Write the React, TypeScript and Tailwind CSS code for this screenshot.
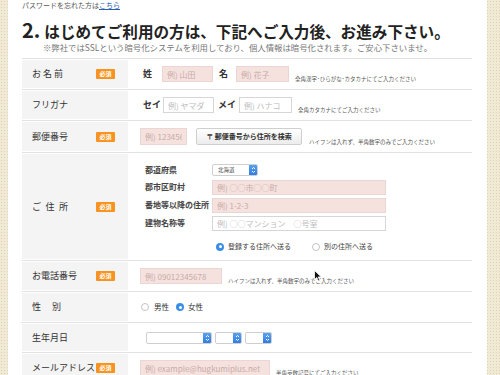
import React from 'react';

const font = { fontFamily: '"Noto Sans CJK JP", "Noto Sans", sans-serif' };

function Badge() {
  return (
    <span className="inline-flex h-[10px] w-[19px] items-center justify-center rounded-[1px] bg-[#f7931e] text-[6px] font-bold leading-none text-white">
      必須
    </span>
  );
}

function Field({ w, ph, pink = true, h = 'h-[16px]' }: { w: string; ph: string; pink?: boolean; h?: string }) {
  return (
    <input
      readOnly
      placeholder={ph}
      className={`${w} ${h} px-[4px] text-[8px] outline-none ${
        pink
          ? 'border border-[#ecd6d3] bg-[#f5e2df] placeholder:text-[#c9aaa7]'
          : 'border border-[#d6d6d6] bg-white placeholder:text-[#bdbdbd]'
      }`}
    />
  );
}

function Select({ w, text = '' }: { w: string; text?: string }) {
  return (
    <div className={`${w} flex h-[12px] items-stretch overflow-hidden rounded-[2px] border border-[#cfcfcf] bg-white`}>
      <span className="flex-1 pl-[5px] text-[5.5px] leading-[11px] text-[#444]">{text}</span>
      <span className="flex w-[8px] items-center justify-center bg-gradient-to-b from-[#5aa2f0] to-[#2f7de0]">
        <svg width="5" height="8" viewBox="0 0 5 8" fill="none" stroke="white" strokeWidth="1">
          <path d="M1 3 L2.5 1.5 L4 3" />
          <path d="M1 5 L2.5 6.5 L4 5" />
        </svg>
      </span>
    </div>
  );
}

function Radio({ on }: { on?: boolean }) {
  return on ? (
    <span className="inline-flex h-[8px] w-[8px] shrink-0 items-center justify-center rounded-full bg-[#3b8ee8]">
      <span className="h-[3px] w-[3px] rounded-full bg-white" />
    </span>
  ) : (
    <span className="inline-block h-[8px] w-[8px] shrink-0 rounded-full border border-[#c4c4c4] bg-white" />
  );
}

function Note({ children }: { children: React.ReactNode }) {
  return <span className="whitespace-nowrap text-[5.5px] text-[#555]">{children}</span>;
}

function Row({ label, req, h, children }: { label: string; req?: boolean; h: string; children: React.ReactNode }) {
  return (
    <div className={`flex ${h} border-b border-[#e2e2e2]`}>
      <div className="my-[1px] flex w-[106px] items-center justify-between bg-[#f4f4f4] pl-[10px] pr-[13px]">
        <span className="whitespace-pre text-[9px] text-[#333]">{label}</span>
        {req && <Badge />}
      </div>
      <div className="flex flex-1 items-center">{children}</div>
    </div>
  );
}

export default function App() {
  return (
    <div
      style={font}
      className="relative h-[375px] w-[500px] overflow-hidden bg-[#f0ead5] bg-[radial-gradient(#ddd3b4_0.8px,transparent_0.9px)] bg-[length:3px_3px]"
    >
      <div className="ml-[8px] h-full w-[479px] bg-white pl-[14px] pr-[15px]">
        <p className="pt-[1px] text-[7px] leading-[9px] text-[#555]">
          パスワードを忘れた方は<span className="text-[#2a5db0] underline">こちら</span>
        </p>
        <h1 className="mt-[10px] whitespace-nowrap text-[15.6px] font-bold leading-[20px] text-[#222]">
          <span className="mr-[4px] text-[20px]">2.</span>はじめてご利用の方は、下記へご入力後、お進み下さい。
        </h1>
        <p className="mt-[1px] whitespace-nowrap pl-[21px] text-[8.4px] leading-[10px] text-[#777]">
          ※弊社ではSSLという暗号化システムを利用しており、個人情報は暗号化されます。ご安心下さいませ。
        </p>

        <div className="mt-[6px] border-t border-[#e2e2e2]">
          <Row label="お 名 前" req h="h-[31px]">
            <span className="ml-[15px] text-[9px] font-bold text-[#333]">姓</span>
            <span className="ml-[10px] flex"><Field w="w-[51px]" ph="例) 山田" /></span>
            <span className="ml-[6px] text-[9px] font-bold text-[#333]">名</span>
            <span className="ml-[8px] flex"><Field w="w-[53px]" ph="例) 花子" /></span>
            <span className="ml-[6px]"><Note>全角漢字･ひらがな･カタカナにてご入力ください</Note></span>
          </Row>
          <Row label="フリガナ" h="h-[31px]">
            <span className="ml-[15px] text-[9px] font-bold text-[#333]">セイ</span>
            <span className="ml-[2px] flex"><Field w="w-[51px]" ph="例) ヤマダ" pink={false} /></span>
            <span className="ml-[4px] text-[9px] font-bold text-[#333]">メイ</span>
            <span className="ml-[3px] flex"><Field w="w-[53px]" ph="例) ハナコ" pink={false} /></span>
            <span className="ml-[6px]"><Note>全角カタカナにてご入力ください</Note></span>
          </Row>
          <Row label="郵便番号" req h="h-[32px]">
            <span className="ml-[12px] flex"><Field w="w-[47px]" ph="例) 1234567" h="h-[17px]" /></span>
            <button className="ml-[9px] flex h-[17px] w-[106px] items-center justify-center rounded-[2px] border border-[#cfcfcf] bg-gradient-to-b from-white to-[#ececec] text-[7px] font-bold text-[#333]">
              〒 郵便番号から住所を検索
            </button>
            <span className="ml-[7px]"><Note>ハイフンは入れず、半角数字のみでご入力ください</Note></span>
          </Row>
          <Row label={'ご\u2002住\u2002所'} req h="h-[108px]">
            <div className="ml-[17px] flex flex-col">
              <div className="flex h-[17px] items-center">
                <span className="w-[67px] text-[8px] font-bold text-[#444]">都道府県</span>
                <Select w="w-[46px]" text="北海道" />
              </div>
              <div className="flex h-[18px] items-center">
                <span className="w-[67px] text-[8px] font-bold text-[#444]">郡市区町村</span>
                <Field w="w-[174px]" ph="例) ○○市○○町" h="h-[15px]" />
              </div>
              <div className="flex h-[18px] items-center">
                <span className="w-[67px] whitespace-nowrap text-[8px] font-bold text-[#444]">番地等以降の住所</span>
                <Field w="w-[174px]" ph="例) 1-2-3" h="h-[15px]" />
              </div>
              <div className="flex h-[18px] items-center">
                <span className="w-[67px] text-[8px] font-bold text-[#444]">建物名称等</span>
                <Field w="w-[174px]" ph="例) ○○マンション　○号室" pink={false} h="h-[15px]" />
              </div>
              <div className="mt-[9px] flex items-center pl-[71px] text-[7px] text-[#444]">
                <Radio on />
                <span className="ml-[4px]">登録する住所へ送る</span>
                <span className="ml-[21px] flex"><Radio /></span>
                <span className="ml-[4px]">別の住所へ送る</span>
              </div>
            </div>
          </Row>
          <Row label="お電話番号" req h="h-[31px]">
            <span className="ml-[12px] flex"><Field w="w-[82px]" ph="例) 09012345678" /></span>
            <span className="ml-[6px]"><Note>ハイフンは入れず、半角数字のみでご入力ください</Note></span>
          </Row>
          <Row label={'性\u3000 別'} h="h-[31px]">
            <div className="ml-[13px] flex items-center text-[7.5px] text-[#333]">
              <Radio />
              <span className="ml-[5px]">男性</span>
              <span className="ml-[7px] flex"><Radio on /></span>
              <span className="ml-[4px]">女性</span>
            </div>
          </Row>
          <Row label="生年月日" h="h-[30px]">
            <div className="ml-[18px] flex items-center gap-[3px]">
              <Select w="w-[66px]" />
              <Select w="w-[27px]" />
              <Select w="w-[27px]" />
            </div>
          </Row>
          <Row label="メールアドレス" req h="h-[31px]">
            <span className="ml-[12px] flex"><Field w="w-[130px]" ph="例) example@hugkumiplus.net" h="h-[17px]" /></span>
            <span className="ml-[6px]"><Note>半角英数記号にてご入力ください</Note></span>
          </Row>
        </div>
      </div>

      <svg className="absolute left-[314px] top-[270px]" width="8" height="12" viewBox="0 0 8 12">
        <path d="M0.5 0.5 L0.5 9.5 L2.8 7.4 L4.4 11 L5.8 10.4 L4.3 6.9 L7.3 6.9 Z" fill="#111" stroke="white" strokeWidth="0.8" />
      </svg>
    </div>
  );
}
